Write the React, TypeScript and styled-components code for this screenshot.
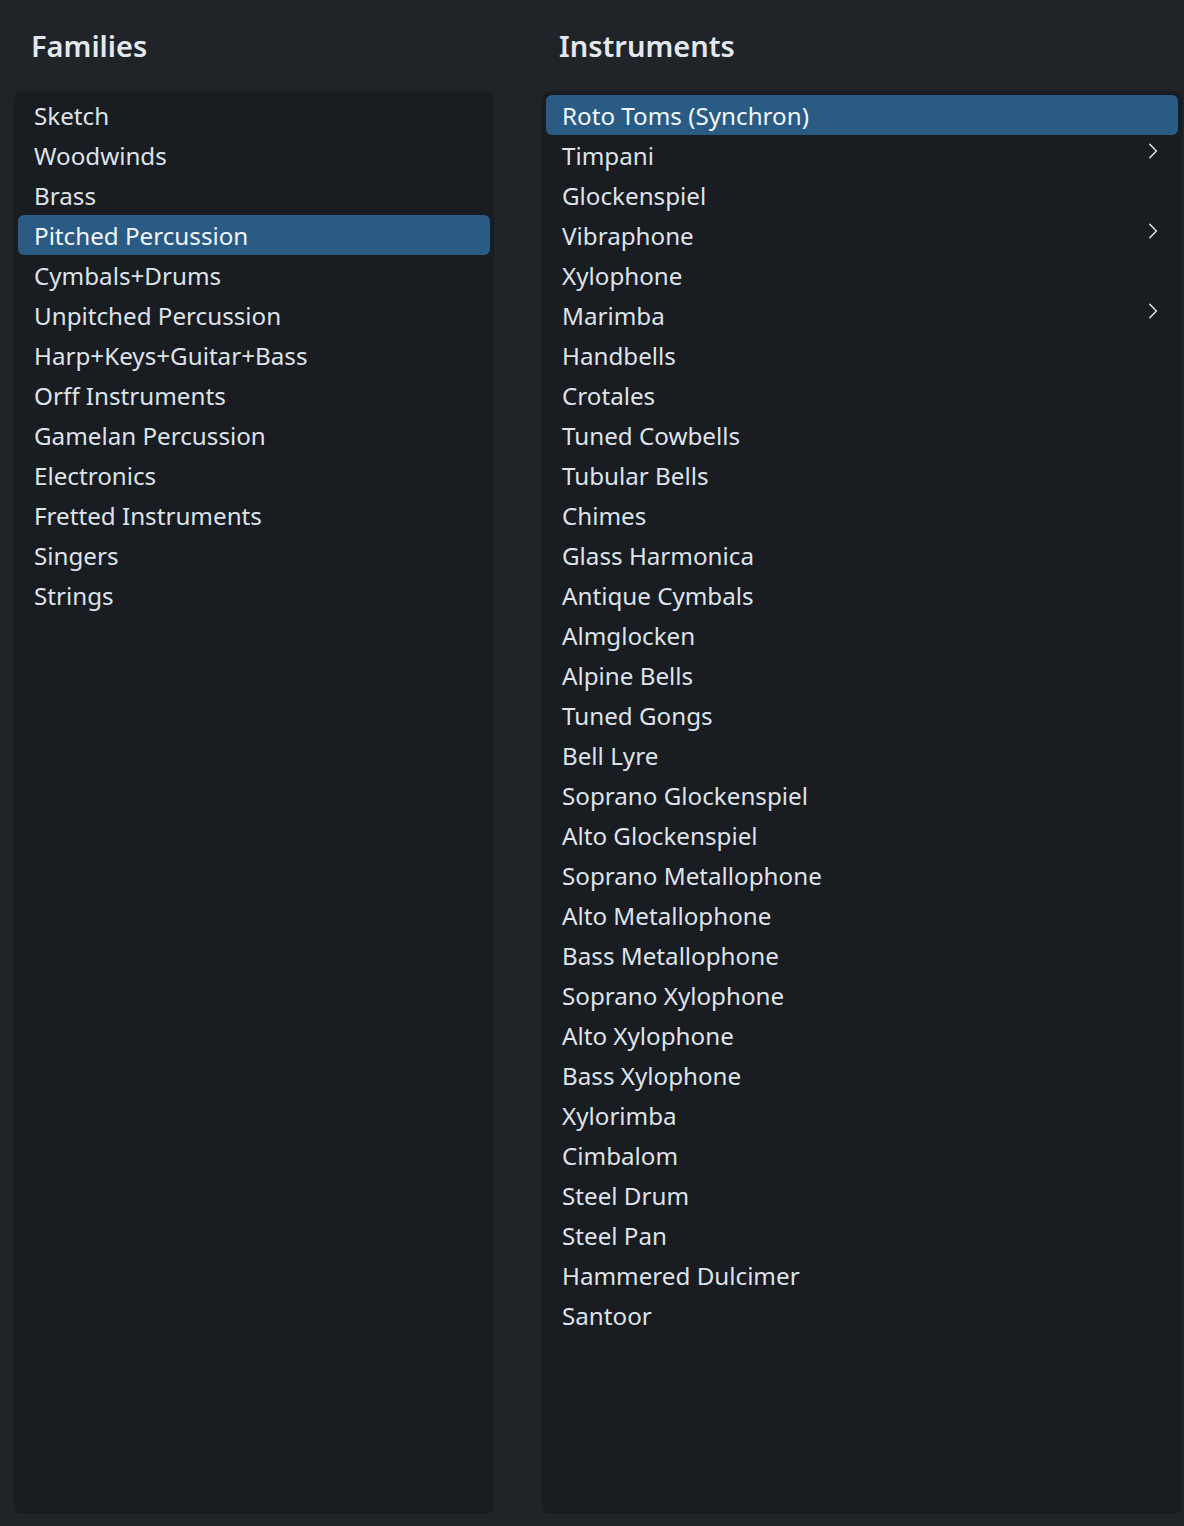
import React from "react";
import styled, { createGlobalStyle } from "styled-components";

const Global = createGlobalStyle`
  html, body { margin: 0; padding: 0; background: #202428; }
  body { font-family: "Noto Sans", "Open Sans", sans-serif; }
`;

const Page = styled.div`
  display: grid;
  grid-template-columns: 480px 1fr;
  column-gap: 48px;
  padding: 0 2px 12px 14px;
  height: 1526px;
  box-sizing: border-box;
  background: #202428;
`;

const Column = styled.section`
  display: flex;
  flex-direction: column;
  min-height: 0;
`;

const Heading = styled.h2`
  margin: 0;
  height: 91px;
  box-sizing: border-box;
  padding: 26px 0 0 17px;
  font-size: 29px;
  font-weight: 600;
  line-height: 40px;
  color: #e3e8ee;
  letter-spacing: 0;
`;

const Panel = styled.ul`
  flex: 1;
  list-style: none;
  margin: 0;
  padding: 4px;
  background: #191c20;
  border-radius: 8px;
`;

const Row = styled.li<{ $selected?: boolean }>`
  display: flex;
  align-items: center;
  justify-content: space-between;
  height: 40px;
  padding: 0 16px 0 16px;
  border-radius: 6px;
  font-size: 24.2px;
  color: ${(p) => (p.$selected ? "#f2f6fa" : "#dde3ea")};
  background: ${(p) => (p.$selected ? "#2a5b84" : "transparent")};
`;

const Label = styled.span`
  white-space: nowrap;
`;

const Chevron = styled.svg`
  width: 10px;
  height: 16px;
  margin: -8px 4px 0 0;
  flex: none;
`;

const families = [
  "Sketch",
  "Woodwinds",
  "Brass",
  "Pitched Percussion",
  "Cymbals+Drums",
  "Unpitched Percussion",
  "Harp+Keys+Guitar+Bass",
  "Orff Instruments",
  "Gamelan Percussion",
  "Electronics",
  "Fretted Instruments",
  "Singers",
  "Strings",
];

const instruments: { name: string; sub?: boolean }[] = [
  { name: "Roto Toms (Synchron)" },
  { name: "Timpani", sub: true },
  { name: "Glockenspiel" },
  { name: "Vibraphone", sub: true },
  { name: "Xylophone" },
  { name: "Marimba", sub: true },
  { name: "Handbells" },
  { name: "Crotales" },
  { name: "Tuned Cowbells" },
  { name: "Tubular Bells" },
  { name: "Chimes" },
  { name: "Glass Harmonica" },
  { name: "Antique Cymbals" },
  { name: "Almglocken" },
  { name: "Alpine Bells" },
  { name: "Tuned Gongs" },
  { name: "Bell Lyre" },
  { name: "Soprano Glockenspiel" },
  { name: "Alto Glockenspiel" },
  { name: "Soprano Metallophone" },
  { name: "Alto Metallophone" },
  { name: "Bass Metallophone" },
  { name: "Soprano Xylophone" },
  { name: "Alto Xylophone" },
  { name: "Bass Xylophone" },
  { name: "Xylorimba" },
  { name: "Cimbalom" },
  { name: "Steel Drum" },
  { name: "Steel Pan" },
  { name: "Hammered Dulcimer" },
  { name: "Santoor" },
];

const ChevronIcon = () => (
  <Chevron viewBox="0 0 10 16">
    <path d="M1.8 1.2 L8.4 8 L1.8 14.8" fill="none" stroke="#dde3ea" strokeWidth="1.5" strokeLinecap="round" strokeLinejoin="round" />
  </Chevron>
);

export default function App() {
  return (
    <>
      <Global />
      <Page>
        <Column>
          <Heading>Families</Heading>
          <Panel>
            {families.map((f) => (
              <Row key={f} $selected={f === "Pitched Percussion"}>
                <Label>{f}</Label>
              </Row>
            ))}
          </Panel>
        </Column>
        <Column>
          <Heading>Instruments</Heading>
          <Panel>
            {instruments.map((i, idx) => (
              <Row key={i.name} $selected={idx === 0}>
                <Label>{i.name}</Label>
                {i.sub && <ChevronIcon />}
              </Row>
            ))}
          </Panel>
        </Column>
      </Page>
    </>
  );
}
